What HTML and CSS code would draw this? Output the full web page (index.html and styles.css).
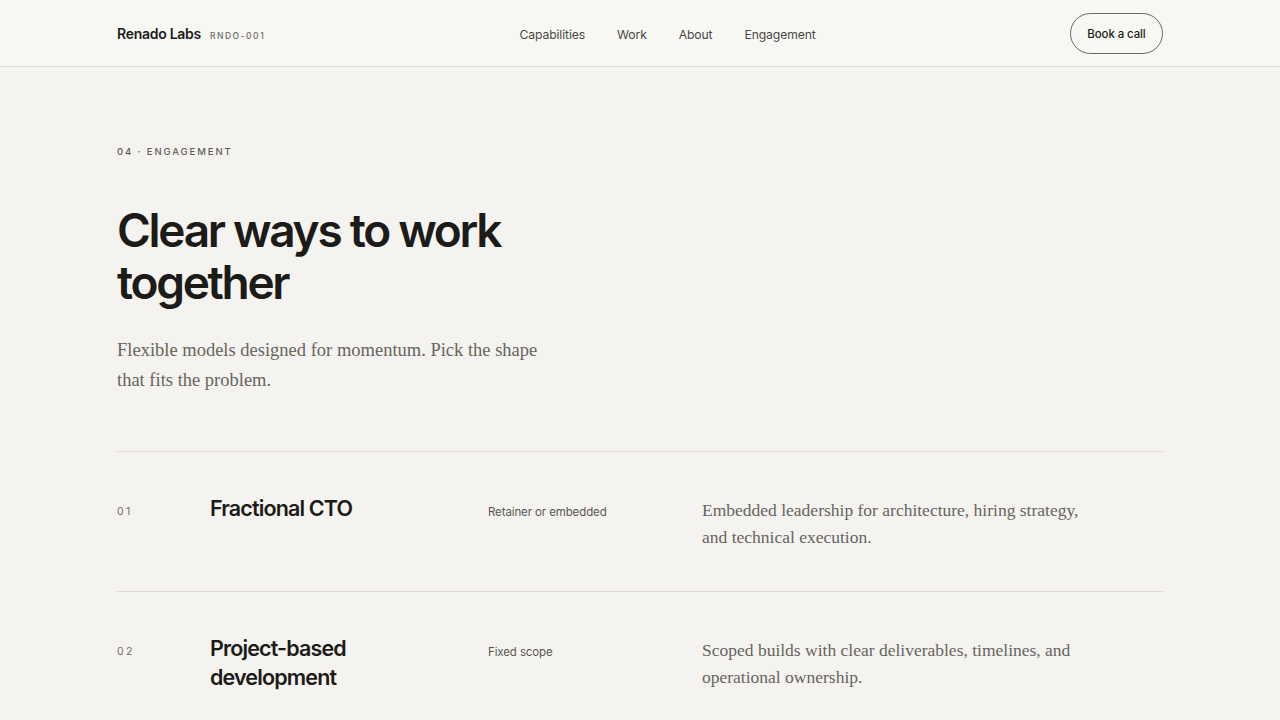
FILE: index.html
```html
<!DOCTYPE html>
<html lang="en">
<head>
<meta charset="utf-8">
<title>Renado Labs — Engagement</title>
<link rel="stylesheet" href="styles.css">
</head>
<body>
<header class="site-header">
  <div class="container header-inner">
    <a class="brand" href="#">
      <span class="brand-name">Renado Labs</span>
      <span class="brand-code">RNDO-001</span>
    </a>
    <nav class="nav">
      <a href="#">Capabilities</a>
      <a href="#">Work</a>
      <a href="#">About</a>
      <a href="#">Engagement</a>
    </nav>
    <a class="btn-call" href="#">Book a call</a>
  </div>
</header>

<main class="container section">
  <p class="eyebrow">04 · Engagement</p>
  <h1 class="title">Clear ways to work together</h1>
  <p class="lede">Flexible models designed for momentum. Pick the shape that fits the problem.</p>

  <ul class="models">
    <li class="model">
      <span class="model-num">01</span>
      <h2 class="model-name">Fractional CTO</h2>
      <span class="model-type">Retainer or embedded</span>
      <p class="model-desc">Embedded leadership for architecture, hiring strategy, and technical execution.</p>
    </li>
    <li class="model">
      <span class="model-num">02</span>
      <h2 class="model-name">Project-based development</h2>
      <span class="model-type">Fixed scope</span>
      <p class="model-desc">Scoped builds with clear deliverables, timelines, and operational ownership.</p>
    </li>
  </ul>
</main>
</body>
</html>
```

FILE: styles.css
```css
* { box-sizing: border-box; }

html, body { margin: 0; padding: 0; }

body {
  background: #f4f3ef;
  color: #1f1e1b;
  font-family: Inter, "Noto Sans", sans-serif;
  -webkit-font-smoothing: antialiased;
}

a { color: inherit; text-decoration: none; }

.container {
  width: 1046px;
  margin: 0 auto;
}

/* Header */
.site-header {
  background: #f7f7f3;
  border-bottom: 1px solid #dedbd4;
}

.header-inner {
  height: 66px;
  display: flex;
  align-items: center;
  justify-content: space-between;
}

.brand {
  display: flex;
  align-items: baseline;
  gap: 9px;
  padding-top: 1px;
}

.brand-name {
  font-size: 14px;
  font-weight: 600;
  letter-spacing: -0.02em;
  color: #1e1d1a;
}

.brand-code {
  font-size: 8.5px;
  font-weight: 500;
  letter-spacing: 0.18em;
  color: #6f6c66;
}

.nav {
  display: flex;
  gap: 32px;
  padding-top: 2px;
  font-size: 12.2px;
  color: #4a4843;
  letter-spacing: -0.01em;
}

.btn-call {
  display: inline-flex;
  align-items: center;
  justify-content: center;
  width: 93px;
  height: 41px;
  padding-top: 2px;
  border: 1px solid #6b6862;
  border-radius: 999px;
  font-size: 11.5px;
  font-weight: 500;
  letter-spacing: -0.01em;
  color: #1e1d1a;
}

/* Section */
.section {
  padding-top: 79px;
}

.eyebrow {
  margin: 0;
  font-size: 9.5px;
  font-weight: 500;
  letter-spacing: 0.2em;
  text-transform: uppercase;
  color: #5f5c57;
  line-height: 12px;
}

.title {
  margin: 46px 0 0;
  width: 420px;
  font-size: 46px;
  font-weight: 600;
  line-height: 52px;
  letter-spacing: -0.05em;
  color: #1c1b18;
}

.lede {
  margin: 27px 0 0;
  width: 440px;
  font-family: "Liberation Serif", serif;
  font-size: 18.5px;
  line-height: 30px;
  color: #67645e;
}

/* Engagement list */
.models {
  list-style: none;
  margin: 56px 0 0;
  padding: 0;
  border-top: 1px solid #dedbd4;
}

.model {
  display: grid;
  grid-template-columns: 93px 278px 214px 1fr;
  align-items: start;
  padding: 42px 0 40px;
  border-bottom: 1px solid #dedbd4;
}

.model-num {
  padding-top: 12px;
  font-size: 10.5px;
  letter-spacing: 0.22em;
  color: #6f6c66;
  line-height: 12px;
}

.model-name {
  margin: 0;
  width: 170px;
  font-size: 21.5px;
  font-weight: 600;
  line-height: 29px;
  letter-spacing: -0.04em;
  color: #1c1b18;
}

.model-type {
  padding-top: 11px;
  font-size: 11.5px;
  line-height: 14px;
  color: #5a5752;
  letter-spacing: -0.01em;
}

.model-desc {
  margin: 0;
  padding-top: 3px;
  width: 385px;
  font-family: "Liberation Serif", serif;
  font-size: 17.5px;
  line-height: 27px;
  color: #67645e;
}
```
